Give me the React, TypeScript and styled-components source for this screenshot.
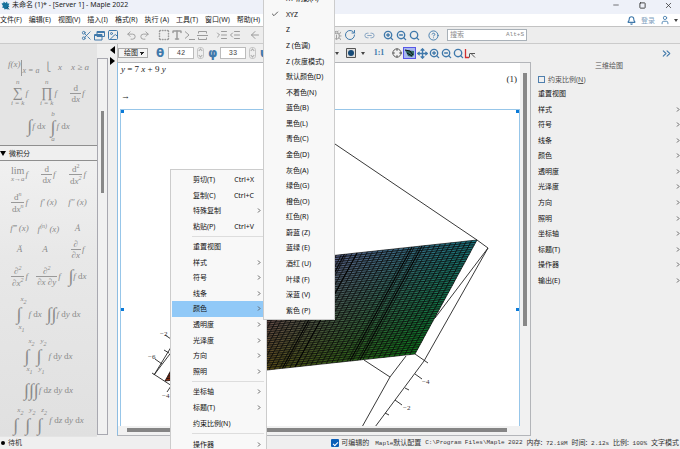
import React from "react";
import styled, { createGlobalStyle, css } from "styled-components";
import {
  Scissors, Image as ImageIcon, Undo2, Redo2, Type, IndentIncrease, IndentDecrease,
  ArrowLeft, ArrowRight, RotateCw, Link2, ZoomIn, ZoomOut, Search, CircleHelp, Bell, User,
  ChevronsRight, Minus, Square, X, Check, Crosshair, Move, Bug, Play, Save, SquareDashed, Layers,
} from "lucide-react";

const BLUE = "#4079ab";
const GREY = "#9b9b9b";
const UI = `"Noto Sans", "Noto Sans CJK SC", sans-serif`;
const MATH = `"Liberation Serif", "DejaVu Serif", serif`;

const Global = createGlobalStyle`
  *, *::before, *::after { box-sizing: border-box; }
  body { margin: 0; background: #efefef; font: 7px/1 ${UI}; color: #222; }
  button, input, select { font: inherit; color: inherit; margin: 0; padding: 0; border: 0; background: none; }
  a { color: inherit; text-decoration: none; }
  svg { display: block; flex: none; }
`;

const Page = styled.div`
  position: relative;
  display: flex;
  flex-direction: column;
  height: 100vh;
  overflow: hidden;
  white-space: nowrap;
`;

const TitleBar = styled.header`
  display: flex;
  align-items: center;
  height: 14px;
  flex: none;
  background: #eef1f9;
  padding: 0 8px 4px 1px;
  gap: 2px;
`;
const Title = styled.h1`
  margin: 0;
  flex: 1;
  font: 7px/10px ${UI};
`;
const WindowButtons = styled.div`
  display: flex;
  gap: 18px;
  color: #333;
`;
const IconButton = styled.button<{ $color?: string; $active?: boolean; $w?: number }>`
  display: flex;
  align-items: center;
  justify-content: center;
  gap: 5px;
  flex: none;
  width: ${(p) => p.$w ?? 13}px;
  height: 12px;
  color: ${(p) => p.$color ?? BLUE};
  ${(p) => p.$active && css`
    outline: 1px solid #5757e8;
    outline-offset: -1px;
    background: #a9b8ee;
  `}
`;

const MenuBar = styled.nav`
  display: flex;
  align-items: center;
  height: 12px;
  flex: none;
  background: #fff;
  gap: 7px;
`;
const MenuButton = styled.button`
  font-size: 7px;
  line-height: 12px;
`;
const Account = styled.div`
  display: flex;
  align-items: center;
  gap: 3px;
  margin-left: auto;
  padding-right: 2px;
  color: #7f9fc0;
`;
const Caret = styled.i`
  border: 2px solid transparent;
  border-top: 3px solid #444;
  border-bottom: 0;
`;

const Toolbar = styled.div`
  display: flex;
  align-items: center;
  height: 18px;
  flex: none;
  background: #ededed;
  border-top: 1px solid #c3c3c3;
  border-bottom: 1px solid #cbcbcb;
  padding-left: 80px;
`;
const Tools = styled.div<{ $before?: number }>`
  display: flex;
  margin-left: ${(p) => p.$before ?? 6}px;
`;
const SearchBox = styled.label`
  display: flex;
  align-items: center;
  justify-content: space-between;
  width: 80px;
  height: 12px;
  margin-left: 7px;
  padding: 0 2px;
  border: 1px solid #a9b1b8;
  background: #fff;
  color: #888;
  font: 6px/10px "Liberation Mono", monospace;
  input { width: 40px; font: 7px/10px ${UI}; }
  input::placeholder { color: #8c8c8c; opacity: 1; }
`;

const Workspace = styled.main`
  flex: 1;
  min-height: 0;
  display: grid;
  grid-template-columns: 108px 9px minmax(0, 1fr) 149px;
`;

const PaletteDock = styled.aside`
  display: grid;
  grid-template-columns: 1fr 11px;
  background: #efefef;
  min-height: 0;
`;
const PaletteScroll = styled.div`
  display: flex;
  flex-direction: column;
  overflow: hidden;
  min-height: 0;
  padding: 14px 0 1px;
  background: #e4e4e4;
`;
const PaletteTop = styled.section`
  height: 87px;
  flex: none;
  overflow: hidden;
`;
const PaletteHead = styled.button`
  display: flex;
  align-items: center;
  gap: 3px;
  height: 16px;
  flex: none;
  width: 100%;
  border-top: 1px solid #8f8f8f;
  border-bottom: 1px solid #8f8f8f;
  background: #efefef;
`;
const OpenMark = styled.i`
  border: 3px solid transparent;
  border-top: 5px solid #000;
  border-bottom: 0;
`;
const PaletteBody = styled.section`
  flex: 1;
  min-height: 0;
  overflow: hidden;
  background: linear-gradient(#f0f0f0, #e8e8e8 35%, #e0e0e0);
`;
const PaletteRow = styled.div<{ $h: number; $wide?: boolean }>`
  display: ${(p) => (p.$wide ? "flex" : "grid")};
  grid-template-columns: repeat(3, 29px);
  justify-content: center;
  align-items: center;
  gap: ${(p) => (p.$wide ? 5 : 0)}px;
  height: ${(p) => p.$h}px;
  flex: none;
`;
const Formula = styled.button`
  display: flex;
  align-items: center;
  justify-content: center;
  font: italic 9px/9px ${MATH};
  color: #8a8a8a;
  b { font-weight: 400; font-style: normal; }
  sup, sub { font-size: 6px; line-height: 6px; }
  sup { vertical-align: 4px; }
`;
const EvalBar = styled.span`
  display: inline-flex;
  align-items: flex-start;
  i { padding: 7px 0 1px 1px; font-size: 8px; line-height: 8px; border-left: 1px solid #999; }
`;
const FracBox = styled.span`
  display: inline-flex;
  flex-direction: column;
  align-items: center;
  margin-right: 1px;
  span { padding: 0 1px; line-height: 10px; }
  span + span { border-top: 1px solid #999; }
`;
const OpBox = styled.span<{ $size: number }>`
  display: inline-flex;
  flex-direction: column;
  align-items: center;
  margin-right: 1px;
  small { font-size: 7px; line-height: 7px; }
  b { font-size: ${(p) => p.$size}px; line-height: ${(p) => p.$size}px; }
`;
const Limits = styled.span`
  display: inline-flex;
  flex-direction: column;
  width: 12px;
  text-align: left;
  small { font-size: 7px; line-height: 9px; }
  small:first-child { padding-left: 4px; }
  small:last-child { padding-left: 2px; }
  b { font-size: 18px; line-height: 18px; }
  sub { font-size: 6px; vertical-align: -3px; }
`;
const Bare = styled.b`
  font-size: 18px;
  line-height: 19px;
`;
const Track = styled.div`
  border: 1px solid #a8a8b0;
  background: #f1f1f1;
  margin: 14px 0 2px;
  padding: 52px 3px 0;
`;
const Thumb = styled.div<{ $h: number }>`
  height: ${(p) => p.$h}px;
  background: #888;
`;
const Splitter = styled.div`
  display: flex;
  flex-direction: column;
  align-items: center;
  gap: 3px;
  padding-top: 2px;
`;

const Center = styled.section`
  display: flex;
  flex-direction: column;
  min-width: 0;
  min-height: 0;
`;
const PlotBar = styled.div`
  display: flex;
  align-items: center;
  height: 18px;
  flex: none;
  border-left: 1px solid #bbb;
`;
const ModeSelect = styled.select`
  width: 30px;
  height: 10px;
  padding-left: 5px;
  margin-right: 8px;
  border: 1px solid #aaa;
  appearance: none;
  font-size: 7px;
  line-height: 8px;
  background:
    linear-gradient(45deg, transparent 50%, #222 50%) right 5px center / 3px 3px no-repeat,
    linear-gradient(315deg, transparent 50%, #222 50%) right 2px center / 3px 3px no-repeat,
    #f4f4f4;
`;
const Angle = styled.label`
  display: flex;
  align-items: center;
  gap: 3px;
  margin-right: 4px;
  color: ${BLUE};
  font: 700 12px/12px "DejaVu Sans", sans-serif;
  span { width: 9px; }
  input {
    width: 26px;
    height: 12px;
    border: 1px solid #bbb;
    background: #fff;
    color: #444;
    text-align: center;
    font: 7px/10px "Liberation Mono", monospace;
  }
`;
const Spin = styled.i`
  display: flex;
  flex-direction: column;
  justify-content: space-around;
  align-items: center;
  width: 7px;
  height: 12px;
  border: 1px solid #c6c6c6;
  border-radius: 3px;
  &::before, &::after { content: ""; width: 3px; height: 3px; border: 1px solid #aaa; transform: rotate(45deg); }
  &::before { border-right: 0; border-bottom: 0; }
  &::after { border-left: 0; border-top: 0; }
`;
const Ratio = styled.button`
  width: 24px;
  color: ${BLUE};
  font: 700 8px/12px "Liberation Serif", serif;
`;

const DocFrame = styled.div`
  flex: 1;
  min-height: 0;
  display: grid;
  grid-template-columns: minmax(0, 1fr) 10px;
  grid-template-rows: minmax(0, 1fr) 9px;
  margin-bottom: 1px;
  border: 1px solid #b3b5b9;
  border-left-color: #8ebde2;
  background: #f1f1f1;
`;
const Sheet = styled.div`
  display: flex;
  flex-direction: column;
  min-height: 0;
  overflow: hidden;
  background: #fff;
  padding-left: 2px;
  font: italic 9px/12px ${MATH};
  color: #222;
`;
const Line = styled.div<{ $h: number }>`
  display: flex;
  justify-content: space-between;
  align-items: center;
  height: ${(p) => p.$h}px;
  flex: none;
  padding: 0 3px 0 1px;
`;
const Upright = styled.span`
  font-style: normal;
`;
const PlotFrame = styled.figure`
  position: relative;
  flex: 1;
  min-height: 0;
  margin: 0;
  border: 1px solid #97c6e9;
  border-bottom: 0;
  overflow: hidden;
`;
const Handle = styled.i<{ $side: "left" | "right"; $mid?: boolean }>`
  position: absolute;
  ${(p) => p.$side}: 0;
  top: ${(p) => (p.$mid ? "calc(50% + 40px)" : "0")};
  width: 3px;
  height: 3px;
  background: #0a7ad8;
`;
const VScroll = styled.div`
  padding: 10px 3px 0;
`;
const HScroll = styled.div`
  padding: 2px 13px 0 9px;
  div { height: 4px; background: #858585; }
`;

const SidePanel = styled.aside`
  display: flex;
  flex-direction: column;
  padding: 3px 0 0 7px;
`;
const Collapse = styled(IconButton)`
  margin: 0 7px 0 auto;
`;
const PanelTitle = styled.h2`
  margin: 0;
  font: 7px/14px ${UI};
  color: #555;
  text-align: center;
`;
const CheckRow = styled.label`
  display: flex;
  align-items: center;
  gap: 3px;
  height: 13px;
  color: #555;
  input { appearance: none; width: 7px; height: 7px; border: 1px solid #4f7fae; }
`;
const PanelList = styled.div`
  display: grid;
  grid-auto-rows: 1fr;
  height: 202px;
`;
const PanelItem = styled.button`
  display: flex;
  align-items: center;
  justify-content: space-between;
  color: #111;
`;

const Chevron = () => (
  <svg width="4" height="5" viewBox="0 0 4 5"><path d="M1 .5 3 2.5 1 4.500" fill="none" stroke="#555" strokeWidth=".9" /></svg>
);

const popup = css`
  position: absolute;
  background: #f8f8f8;
  border: 1px solid #ccc;
`;
const ContextMenu = styled.div`
  ${popup}
  left: 170px;
  top: 169px;
  width: 97px;
  padding: 2px 1px;
`;
const MenuGroup = styled.div<{ $h: number }>`
  display: grid;
  grid-auto-rows: 1fr;
  height: ${(p) => p.$h}px;
`;
const MenuRule = styled.hr`
  margin: 2px 1px 2px 20px;
  border: 0;
  border-top: 1px solid #ddd;
`;
const MenuItem = styled.button<{ $on?: boolean }>`
  display: flex;
  align-items: center;
  width: 100%;
  padding: 0 4px 0 21px;
  background: ${(p) => (p.$on ? "#91c9f7" : "none")};
  text-align: left;
  color: #111;
  svg, kbd { margin-left: auto; }
  kbd { font: inherit; padding-right: 7px; }
`;
const SubMenu = styled.div`
  ${popup}
  left: 263px;
  top: -10px;
  width: 72px;
  padding-bottom: 1px;
`;
const SubItem = styled.button`
  display: grid;
  grid-template-columns: 22px 1fr;
  align-items: center;
  text-align: left;
  color: #111;
  svg { margin-left: 7px; }
  span { grid-column: 2; }
`;

const StatusBar = styled.footer`
  display: flex;
  align-items: center;
  height: 12px;
  flex: none;
  padding: 0 1px;
  gap: 4px;
  font: 6px/12px "Liberation Mono", "Noto Sans CJK SC", monospace;
  color: #333;
`;
const Cn = styled.span`
  font: 7px/12px ${UI};
`;
const Ready = styled.div`
  display: flex;
  align-items: center;
  gap: 3px;
  margin-right: auto;
`;
const Dot = styled.i`
  width: 4px;
  height: 4px;
  border-radius: 50%;
  background: #000;
`;
const Editable = styled.label`
  display: flex;
  align-items: center;
  gap: 2px;
  margin-right: 2px;
  input {
    appearance: none;
    width: 8px;
    height: 8px;
    border-radius: 1px;
    background: #0b5fb8;
    display: grid;
    place-items: center;
  }
  input::after { content: ""; width: 5px; height: 3px; border: solid #fff; border-width: 0 0 1px 1px; transform: rotate(-45deg); }
`;

const Frac = ({ n, d }: { n: React.ReactNode; d: React.ReactNode }) => (
  <FracBox><span>{n}</span><span>{d}</span></FracBox>
);
const Op = ({ s, top, low, size = 16 }: { s: string; top?: string; low?: string; size?: number }) => (
  <OpBox $size={size}>{top && <small>{top}</small>}<b>{s}</b>{low && <small>{low}</small>}</OpBox>
);
const Integral = ({ v, upperOnly }: { v: string; upperOnly?: boolean }) => (
  <Limits><small>{v}<sub>2</sub></small><b>∫</b>{!upperOnly && <small>{v}<sub>1</sub></small>}</Limits>
);
const D = ({ v }: { v: string }) => <span>&nbsp;<b>d</b>{v}</span>;

function Palettes() {
  return (
    <PaletteScroll>
      <PaletteTop>
        <PaletteRow $h={19} $wide>
          <Formula><EvalBar>f(x)<i>x = a</i></EvalBar></Formula>
          <Formula><b>⎩</b>&nbsp; &nbsp;x &nbsp; &nbsp;x ≥ a</Formula>
        </PaletteRow>
        <PaletteRow $h={32}>
          <Formula><Op s="∑" top="n" low="i = k" size={14} />f</Formula>
          <Formula><Op s="∏" top="n" low="i = k" size={14} />f</Formula>
          <Formula><Frac n={<b>d</b>} d={<><b>d</b>x</>} />f</Formula>
        </PaletteRow>
        <PaletteRow $h={35} $wide>
          <Formula><Bare>∫</Bare>f<D v="x" /></Formula>
          <Formula><Op s="∫" top="b" low="a" size={18} />f<D v="x" /></Formula>
        </PaletteRow>
      </PaletteTop>
      <PaletteHead><OpenMark />微积分</PaletteHead>
      <PaletteBody>
        <PaletteRow $h={26}>
          <Formula><OpBox $size={10}><b>lim</b><small>x→a</small></OpBox>f</Formula>
          <Formula><Frac n={<b>d</b>} d={<><b>d</b>x</>} />f</Formula>
          <Formula><Frac n={<b>d<sup>2</sup></b>} d={<><b>d</b>x<sup>2</sup></>} />f</Formula>
        </PaletteRow>
        <PaletteRow $h={30}>
          <Formula><Frac n={<><b>d</b><sup>n</sup></>} d={<><b>d</b>x<sup>n</sup></>} />f</Formula>
          <Formula>f′ (x)</Formula>
          <Formula>f″ (x)</Formula>
        </PaletteRow>
        <PaletteRow $h={22}>
          <Formula>f‴ (x)</Formula>
          <Formula><span>f<sup>(n)</sup> (x)</span></Formula>
          <Formula>Ȧ</Formula>
        </PaletteRow>
        <PaletteRow $h={20}>
          <Formula>Ä</Formula>
          <Formula>A&#x20DB;</Formula>
          <Formula><Frac n="∂" d="∂x" />f</Formula>
        </PaletteRow>
        <PaletteRow $h={34}>
          <Formula><Frac n={<>∂<sup>2</sup></>} d={<>∂x<sup>2</sup></>} />f</Formula>
          <Formula><Frac n={<>∂<sup>2</sup></>} d="∂x ∂y" />f</Formula>
          <Formula><Bare>∫</Bare>f<D v="x" /></Formula>
        </PaletteRow>
        <PaletteRow $h={42} $wide>
          <Formula><Integral v="x" />f<D v="x" /></Formula>
          <Formula><Bare>∫∫</Bare>f<D v="y" /><D v="x" /></Formula>
        </PaletteRow>
        <PaletteRow $h={42} $wide>
          <Formula><Integral v="x" /><Integral v="y" />f<D v="y" /><D v="x" /></Formula>
        </PaletteRow>
        <PaletteRow $h={26} $wide>
          <Formula><Bare>∫∫∫</Bare>f<D v="z" /><D v="y" /><D v="x" /></Formula>
        </PaletteRow>
        <PaletteRow $h={34} $wide>
          <Formula><Integral v="x" upperOnly /><Integral v="y" upperOnly /><Integral v="z" upperOnly />f<D v="z" /><D v="y" /><D v="x" /></Formula>
        </PaletteRow>
      </PaletteBody>
    </PaletteScroll>
  );
}

const TL = [227, 267], TR = [477, 240], BR = [415, 354], BL = [165, 381];
const cTL = [132, 76, 138], cTR = [24, 122, 132], cBR = [10, 118, 22], cBL = [140, 46, 18];
const mix = (a: number[], b: number[], c: number[], d: number[], u: number, v: number) =>
  a.map((_, i) => (a[i] * (1 - u) + b[i] * u) * (1 - v) + (d[i] * (1 - u) + c[i] * u) * v);
const point = (u: number, v: number) => mix(TL, TR, BR, BL, u, v).map((n) => n.toFixed(1)).join(",");

function Surface() {
  const N = 48;
  const cells: React.ReactNode[] = [];
  for (let i = 0; i < N; i++)
    for (let j = 0; j < N; j++) {
      const u = i / N, v = j / N, s = 1 / N;
      const c = mix(cTL, cTR, cBR, cBL, u, v).map(Math.round);
      cells.push(
        <polygon
          key={`${i}-${j}`}
          points={[point(u, v), point(u + s, v), point(u + s, v + s), point(u, v + s)].join(" ")}
          fill={`rgb(${c.join()})`}
        />
      );
    }
  const folds = [0.13, 0.19, 0.47, 0.52, 0.74, 0.78].map((u) => `M${point(u, 0)} ${point(u, 1)}`).join("");
  return (
    <g stroke="#050505">
      <g strokeWidth=".68">{cells}</g>
      <path d={folds} strokeWidth="1.1" />
    </g>
  );
}

function Plot() {
  return (
    <svg width="400" height="316" viewBox="121 110 400 316" role="img" aria-label="三维绘图">
      <g fill="none" stroke="#222" strokeWidth=".9">
        <path d="M227 71 477 240 488 248 435 318M488 248 424 361M364 360 390 377 362 427M390 377 406 356M415 354 428 363" />
        <path d="M424 361 375 427M415 374l7 5M405 388l4 2M395 400l7 5M385 413l4 2" />
        <path d="M152 373l20 13M154 375 176 339M154 375 182 338M155 359l7 5M164 350l5 3M165 335l6 4M171 386l-4 6" />
      </g>
      <Surface />
      <g fill="#333" fontFamily="Liberation Serif, serif" fontSize="7" fontStyle="normal">
        <text x="422" y="384">−4</text>
        <text x="403" y="410">−2</text>
        <text x="160" y="336">−2</text>
        <text x="148" y="359">−6</text>
        <text x="162" y="398">−4</text>
      </g>
    </svg>
  );
}

const Leaf = () => (
  <svg width="9" height="9" viewBox="0 0 18 18">
    <path fill="#16719c" d="M1 5l4-1 0-3 4 3 3-3 1 4 4 0-2 4 2 3-4 1 1 4-4-1-3 1-1-3-4-1 2-3z" />
    <path d="M12 12l4 5" stroke="#0d4461" strokeWidth="2" />
  </svg>
);
const Windows = () => (
  <svg width="11" height="11" viewBox="0 0 11 11" fill="#ededed" stroke="currentColor">
    <path d="M3 1.500h7.500v5H3zM3 2.500h7.500M.5 4.500H8v5.500H.5zM.5 5.500H8" />
  </svg>
);
const Sections = () => (
  <svg width="11" height="11" viewBox="0 0 11 11" fill="none" stroke="currentColor">
    <path d="M0 5.500h11M1.500 3.500v-2h8v2M1.500 7.500v2h8v-2" />
  </svg>
);
const Prompt = () => (
  <svg width="11" height="11" viewBox="0 0 11 11" fill="none" stroke="currentColor">
    <path d="M1 1.500 5 5 1 8.500M5 9.500h6" />
  </svg>
);
const PlotCube = () => (
  <svg width="10" height="10" viewBox="0 0 10 10">
    <path d="M.5.5h9v9h-9z" fill="#ddd" stroke="#555" /><circle cx="5" cy="5" r="3" fill="#164a78" />
  </svg>
);
const Pointer = () => (
  <svg width="11" height="11" viewBox="0 0 11 11">
    <path d="M1 2l9 1v4L8 9 4 8z" fill="#2f6a68" /><path d="M1 2l5 1 3 4M3 5l5 3" stroke="#111" fill="none" />
  </svg>
);
const Axes = () => (
  <svg width="12" height="11" viewBox="0 0 12 11" fill="none">
    <path d="M1.500 1v8.500H5" stroke="#d03030" strokeWidth="1.300" /><path d="M5.500 9.500V5.500M6 5.500h5M7 5.500l4 4" stroke="#555" />
  </svg>
);
const Triangle = ({ d }: { d: string }) => (
  <svg width="5" height="8" viewBox="0 0 5 8"><path d={d} fill="#000" /></svg>
);

const menus = ["文件(F)", "编辑(E)", "视图(V)", "插入(I)", "格式(R)", "执行 (A)", "工具(T)", "窗口(W)", "帮助(H)"];
const panel = ["重置视图", "样式", "符号", "线条", "颜色", "透明度", "光泽度", "方向", "照明", "坐标轴", "标题(T)", "操作器", "输出(E)"];
const colours = ["XY 阴影(A)", "XYZ", "Z", "Z (色调)", "Z (灰度模式)", "默认颜色(D)", "不着色(N)", "蓝色(B)", "黑色(L)", "青色(C)", "金色(D)", "灰色(A)", "绿色(G)", "橙色(O)", "红色(R)", "蔚蓝 (Z)", "蓝绿 (E)", "酒红 (U)", "叶绿 (F)", "深蓝 (V)", "紫色 (P)"];
type Entry = { t: string; key?: string; sub?: boolean };
const sub = (t: string): Entry => ({ t, sub: true });
const groups: { h: number; items: Entry[] }[] = [
  { h: 62, items: [{ t: "剪切(T)", key: "Ctrl+X" }, { t: "复制(C)", key: "Ctrl+C" }, sub("特殊复制"), { t: "粘贴(P)", key: "Ctrl+V" }] },
  { h: 140, items: [{ t: "重置视图" }, ...["样式", "符号", "线条", "颜色", "透明度", "光泽度", "方向", "照明"].map(sub)] },
  { h: 47, items: [sub("坐标轴"), sub("标题(T)"), { t: "约束比例(N)" }] },
  { h: 16, items: [sub("操作器")] },
];

export default function App() {
  return (
    <Page>
      <Global />
      <TitleBar>
        <Leaf />
        <Title>未命名 (1)* - [Server 1] - Maple 2022</Title>
        <WindowButtons>
          <IconButton $w={8} $color="#333" aria-label="最小化"><Minus size={8} /></IconButton>
          <IconButton $w={8} $color="#333" aria-label="最大化"><Square size={7} strokeWidth={3} /></IconButton>
          <IconButton $w={8} $color="#333" aria-label="关闭"><X size={9} /></IconButton>
        </WindowButtons>
      </TitleBar>
      <MenuBar>
        {menus.map((m) => <MenuButton key={m}>{m}</MenuButton>)}
        <Account>
          <IconButton aria-label="通知"><Bell size={9} strokeWidth={3} /></IconButton>
          <a href="#login">登录</a>
          <IconButton aria-label="账户"><User size={10} /></IconButton>
          <Caret />
        </Account>
      </MenuBar>
      <Toolbar>
        <Tools $before={0}>
          <IconButton aria-label="剪切"><Scissors size={11} strokeWidth={2} /></IconButton>
          <IconButton aria-label="复制"><Windows /></IconButton>
          <IconButton aria-label="粘贴"><ImageIcon size={12} strokeWidth={2} /></IconButton>
        </Tools>
        <Tools>
          <IconButton $color={GREY} aria-label="撤销"><Undo2 size={11} /></IconButton>
          <IconButton $color={GREY} aria-label="重做"><Redo2 size={11} /></IconButton>
        </Tools>
        <Tools>
          <IconButton $color={GREY} aria-label="区域"><SquareDashed size={12} strokeWidth={3} /></IconButton>
          <IconButton $color={GREY} aria-label="文本"><Type size={12} strokeWidth={3} /></IconButton>
          <IconButton $color={GREY} aria-label="命令"><Prompt /></IconButton>
          <IconButton $color={GREY} aria-label="节"><Sections /></IconButton>
        </Tools>
        <Tools>
          <IconButton $color={GREY} aria-label="缩进"><IndentIncrease size={12} /></IconButton>
          <IconButton $color={GREY} aria-label="减少缩进"><IndentDecrease size={12} /></IconButton>
        </Tools>
        <Tools $before={7}>
          <IconButton $color={GREY} aria-label="后退"><ArrowLeft size={12} /></IconButton>
          <IconButton aria-label="前进"><ArrowRight size={12} /></IconButton>
        </Tools>
        <Tools>
          <IconButton aria-label="保存"><Save size={10} /></IconButton>
          <IconButton aria-label="图层"><Layers size={10} /></IconButton>
          <IconButton aria-label="执行"><Play size={10} /></IconButton>
        </Tools>
        <Tools $before={11}>
          <IconButton $color={GREY} aria-label="调试"><Bug size={11} /></IconButton>
          <IconButton aria-label="重启"><RotateCw size={12} /></IconButton>
        </Tools>
        <Tools $before={7}><IconButton $color="#7f9fc0" aria-label="链接"><Link2 size={11} /></IconButton></Tools>
        <Tools>
          <IconButton aria-label="放大"><ZoomIn size={11} strokeWidth={3} /></IconButton>
          <IconButton aria-label="缩小"><ZoomOut size={11} strokeWidth={3} /></IconButton>
          <IconButton aria-label="缩放"><Search size={11} strokeWidth={3} /></IconButton>
        </Tools>
        <Tools><IconButton aria-label="帮助"><CircleHelp size={11} /></IconButton></Tools>
        <SearchBox><input aria-label="搜索" placeholder="搜索" />Alt+S</SearchBox>
      </Toolbar>
      <Workspace>
        <PaletteDock>
          <Palettes />
          <Track><Thumb $h={82} /></Track>
        </PaletteDock>
        <Splitter>
          <Triangle d="M5 0v8L0 4z" />
          <Triangle d="M0 0v8l5-4z" />
        </Splitter>
        <Center>
          <PlotBar>
            <ModeSelect aria-label="模式"><option>绘图</option></ModeSelect>
            <Angle><span>θ</span><input aria-label="θ" defaultValue="42" /><Spin /></Angle>
            <Angle><span>φ</span><input aria-label="φ" defaultValue="33" /><Spin /></Angle>
            <Angle><span>ψ</span><input aria-label="ψ" defaultValue="0" /><Spin /></Angle>
            <Tools $before={19}>
              <IconButton $w={12} aria-label="更多"><Caret /></IconButton>
              <IconButton $w={24} aria-label="绘图样式"><PlotCube /><Caret /></IconButton>
            </Tools>
            <Ratio>1:1</Ratio>
            <Tools $before={0}>
              <IconButton $w={12} $color="#444" aria-label="探测"><Crosshair size={10} /></IconButton>
              <IconButton $active aria-label="旋转"><Pointer /></IconButton>
              <IconButton $w={12} aria-label="平移"><Move size={11} strokeWidth={3} /></IconButton>
              <IconButton $w={12} aria-label="放大绘图"><ZoomIn size={11} strokeWidth={3} /></IconButton>
              <IconButton $w={12} aria-label="缩小绘图"><ZoomOut size={11} strokeWidth={3} /></IconButton>
              <IconButton $w={12} aria-label="缩放绘图"><Search size={11} strokeWidth={3} /></IconButton>
              <IconButton $w={12} aria-label="坐标轴"><Axes /></IconButton>
            </Tools>
          </PlotBar>
          <DocFrame>
            <Sheet>
              <Line $h={12}><span>y <Upright>=</Upright> <Upright>7</Upright> x <Upright>+</Upright> <Upright>9</Upright> y</span></Line>
              <Line $h={8}><span /><Upright>(1)</Upright></Line>
              <Line $h={26}><Upright>→</Upright></Line>
              <PlotFrame>
                <Plot />
                <Handle $side="left" /><Handle $side="right" />
                <Handle $side="left" $mid /><Handle $side="right" $mid />
              </PlotFrame>
            </Sheet>
            <VScroll><Thumb $h={253} /></VScroll>
            <HScroll><div /></HScroll>
          </DocFrame>
        </Center>
        <SidePanel>
          <Collapse aria-label="收起"><ChevronsRight size={13} /></Collapse>
          <PanelTitle>三维绘图</PanelTitle>
          <CheckRow><input type="checkbox" /><span>约束比例(<u>N</u>)</span></CheckRow>
          <PanelList>
            {panel.map((p, i) => <PanelItem key={p}>{p}{i > 0 && <Chevron />}</PanelItem>)}
          </PanelList>
        </SidePanel>
      </Workspace>
      <StatusBar>
        <Ready><Dot /><Cn>待机</Cn></Ready>
        <Editable><input type="checkbox" defaultChecked /><Cn>可编辑的</Cn></Editable>
        <span>Maple<Cn>默认配置</Cn></span>
        <span>C:\Program Files\Maple 2022</span>
        <span><Cn>内存:</Cn> 72.18M</span>
        <span><Cn>时间:</Cn> 2.12s</span>
        <span><Cn>比例:</Cn> 100%</span>
        <Cn>文字模式</Cn>
      </StatusBar>
      <ContextMenu role="menu">
        {groups.map((g, i) => (
          <React.Fragment key={g.h}>
            {i > 0 && <MenuRule />}
            <MenuGroup $h={g.h}>
              {g.items.map((m) => (
                <MenuItem key={m.t} role="menuitem" $on={m.t === "颜色"}>
                  {m.t}{m.key && <kbd>{m.key}</kbd>}{m.sub && <Chevron />}
                </MenuItem>
              ))}
            </MenuGroup>
          </React.Fragment>
        ))}
      </ContextMenu>
      <SubMenu role="menu">
        <MenuGroup $h={327}>
          {colours.map((c) => (
            <SubItem key={c} role="menuitem">{c === "XYZ" && <Check size={8} />}<span>{c}</span></SubItem>
          ))}
        </MenuGroup>
      </SubMenu>
    </Page>
  );
}
